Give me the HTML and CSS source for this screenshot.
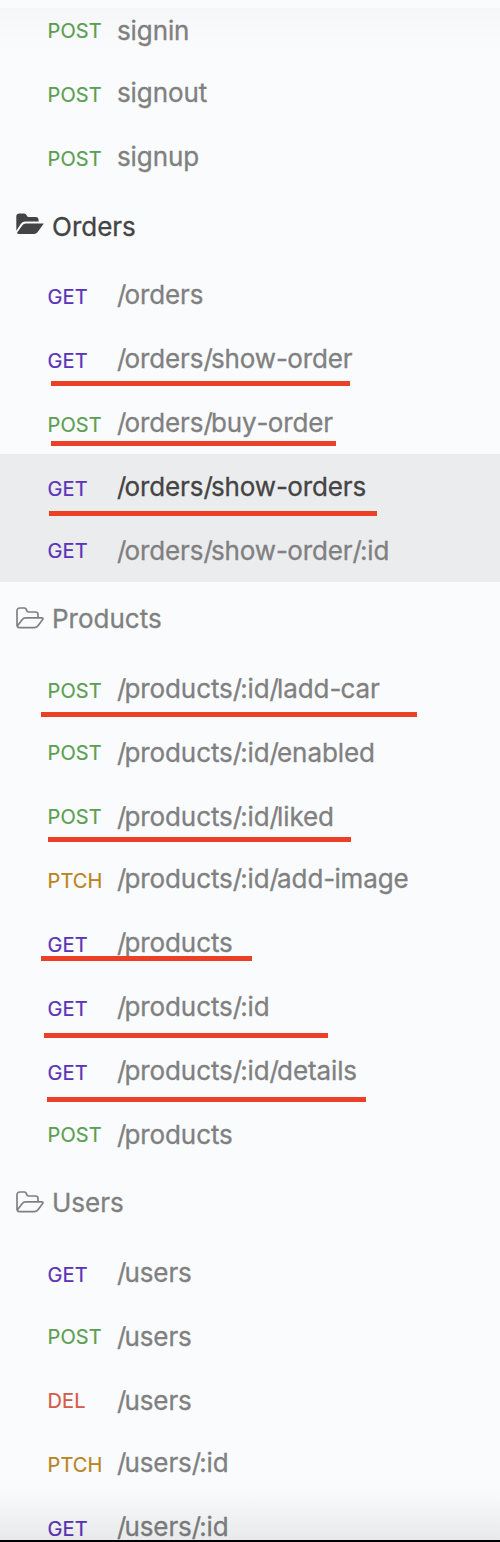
FILE: index.html
```html
<!DOCTYPE html>
<html lang="en">
<head>
<meta charset="utf-8">
<title>Requests</title>
<link rel="stylesheet" href="styles.css">
</head>
<body>
<svg width="0" height="0" class="defs" aria-hidden="true">
  <symbol id="folder" viewBox="0 0 28 22">
    <path d="M1 18.5V4Q1 1 4 1H8.3Q9.5 1 10 2L11 4Q11.6 5 12.8 5H19.5Q22 5 22 7.5V10.7M1.3 19L6.5 12.2Q7.5 10.8 9.3 10.8H25.3Q27.8 10.8 26.5 12.8L22.2 18.6Q20.8 20.6 18.5 20.6H3.5Q1 20.6 1 18" fill="none" stroke="currentColor" stroke-width="1.7" stroke-linejoin="round"/>
  </symbol>
  <symbol id="folder-solid" viewBox="0 0 28 22">
    <path d="M.3 17.8V3.6Q.3.5 3.4.5H8.2Q9.8.5 10.5 2L11 3Q11.5 4 12.7 4H19.5Q22.6 4 22.6 7.2V8.6H9.3Q6.5 8.6 4.9 10.8Z" fill="currentColor"/>
    <path d="M1.2 19.6L6.4 12.2Q7.6 10.4 9.8 10.4H27.8L21.7 19Q20.3 20.9 18 20.9H2.6Q.6 20.9 1.2 19.6Z" fill="currentColor"/>
  </symbol>
</svg>
<main class="sidebar">
  <div class="row short"><span class="method post up">POST</span><span class="name">signin</span></div>
  <div class="row"><span class="method post">POST</span><span class="name">signout</span></div>
  <div class="row"><span class="method post">POST</span><span class="name">signup</span></div>

  <div class="folder open"><svg class="icon"><use href="#folder-solid"/></svg><span class="title">Orders</span></div>
  <div class="row"><span class="method get">GET</span><span class="name"><span class="sep">/</span>orders</span></div>
  <div class="row"><span class="method get">GET</span><span class="name"><span class="sep">/</span>orders<span class="sep">/</span>show<span class="dash">-</span>order</span><i class="mark m1"></i></div>
  <div class="row"><span class="method post">POST</span><span class="name"><span class="sep">/</span>orders<span class="sep">/</span>buy<span class="dash">-</span>order</span><i class="mark m2"></i></div>
  <div class="row shaded active"><span class="method get">GET</span><span class="name"><span class="sep">/</span>orders<span class="sep">/</span>show<span class="dash">-</span>orders</span><i class="mark m3"></i></div>
  <div class="row shaded"><span class="method get up">GET</span><span class="name"><span class="sep">/</span>orders<span class="sep">/</span>show<span class="dash">-</span>order<span class="sep">/</span>:id</span></div>

  <div class="folder"><svg class="icon"><use href="#folder"/></svg><span class="title">Products</span></div>
  <div class="row"><span class="method post">POST</span><span class="name"><span class="sep">/</span>products<span class="sep">/</span>:id<span class="sep">/</span>ladd<span class="dash">-</span>car</span><i class="mark m4"></i></div>
  <div class="row"><span class="method post up">POST</span><span class="name"><span class="sep">/</span>products<span class="sep">/</span>:id<span class="sep">/</span>enabled</span></div>
  <div class="row short-after"><span class="method post up">POST</span><span class="name"><span class="sep">/</span>products<span class="sep">/</span>:id<span class="sep">/</span>liked</span><i class="mark m5"></i></div>
  <div class="row"><span class="method patch">PTCH</span><span class="name"><span class="sep">/</span>products<span class="sep">/</span>:id<span class="sep">/</span>add<span class="dash">-</span>image</span></div>
  <div class="row"><span class="method get">GET</span><span class="name"><span class="sep">/</span>products</span><i class="mark m6"></i></div>
  <div class="row"><span class="method get">GET</span><span class="name"><span class="sep">/</span>products<span class="sep">/</span>:id</span><i class="mark m7"></i></div>
  <div class="row"><span class="method get">GET</span><span class="name"><span class="sep">/</span>products<span class="sep">/</span>:id<span class="sep">/</span>details</span><i class="mark m8"></i></div>
  <div class="row"><span class="method post up">POST</span><span class="name"><span class="sep">/</span>products</span></div>

  <div class="folder"><svg class="icon"><use href="#folder"/></svg><span class="title">Users</span></div>
  <div class="row"><span class="method get">GET</span><span class="name"><span class="sep">/</span>users</span></div>
  <div class="row"><span class="method post up">POST</span><span class="name"><span class="sep">/</span>users</span></div>
  <div class="row short-after"><span class="method del up">DEL</span><span class="name"><span class="sep">/</span>users</span></div>
  <div class="row"><span class="method patch">PTCH</span><span class="name"><span class="sep">/</span>users<span class="sep">/</span>:id</span></div>
  <div class="row"><span class="method get">GET</span><span class="name"><span class="sep">/</span>users<span class="sep">/</span>:id</span></div>
  <div class="shade top"></div>
  <div class="shade bottom"></div>
</main>
</body>
</html>
```
FILE: styles.css
```css
* { box-sizing: border-box; }
body { margin: 0; background: #f9fbfd; font-family: Inter, "Liberation Sans", sans-serif; }
.defs { position: absolute; }
.sidebar { position: relative; height: 1542px; overflow: hidden; color: #808080; }
.row {
  position: relative;
  display: flex;
  align-items: baseline;
  height: 64px;
  padding-left: 47.6px;
  line-height: 66px;
  white-space: nowrap;
}
.short { height: 60px; line-height: 61px; }
.short-after { height: 62px; }
.method { flex: none; width: 69.4px; font-size: 20px; letter-spacing: .05px; -webkit-text-stroke: .2px currentColor; }
.name, .title { font-size: 26px; -webkit-text-stroke: .3px currentColor; }
.name { letter-spacing: -.1px; }
.sep { letter-spacing: -1.9px; }
.dash { letter-spacing: -.8px; }
.up { transform: translateY(-2px); }
.short .up { transform: translateY(-2px); }
.post { color: #5d9f52; }
.get { color: #5a35b8; }
.patch { color: #b98422; }
.del { color: #d65b4a; }
.shaded { background: #ebecee; }
.active .name, .open { color: #444; }
.folder { display: flex; height: 74px; padding-left: 16px; line-height: 74px; }
.icon { width: 28px; height: 22px; margin: 25px 8px 0 0; }
.open .title { padding-top: 2px; }
.mark { position: absolute; z-index: 1; height: 5px; background: #eb4025; }
.m1 { left: 51px; top: 55px; width: 299px; }
.m2 { left: 51px; top: 51px; width: 285px; }
.m3 { left: 49px; top: 57px; width: 328px; }
.m4 { left: 41px; top: 56px; width: 376px; }
.m5 { left: 48px; top: 53px; width: 303px; }
.m6 { left: 41px; top: 46px; width: 211px; }
.m7 { left: 44px; top: 59px; width: 284px; }
.m8 { left: 47px; top: 59px; width: 319px; }
.shade { position: absolute; left: 0; width: 100%; }
.top { top: 8px; height: 44px; background: linear-gradient(rgba(0,0,0,.02), transparent); }
.bottom { bottom: 0; height: 54px; border-bottom: 2px solid #000; background: linear-gradient(transparent, rgba(0,0,0,.07)); }
```
